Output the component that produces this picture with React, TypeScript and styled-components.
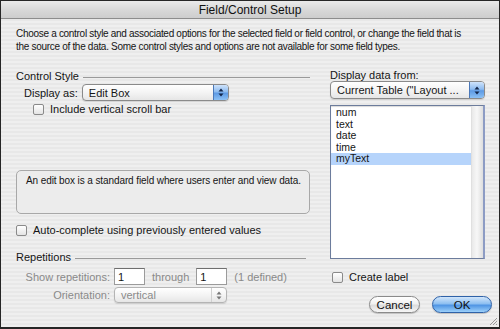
import React from "react";
import styled, { createGlobalStyle } from "styled-components";

const GlobalStyle = createGlobalStyle`
  html, body {
    margin: 0;
    padding: 0;
    background: #ffffff;
  }
  body {
    font-family: "Liberation Sans", Arial, sans-serif;
    color: #151515;
  }
`;

const Window = styled.div`
  position: relative;
  width: 500px;
  height: 329px;
  box-sizing: border-box;
  border: 1px solid #262626;
  border-bottom-width: 2px;
  overflow: hidden;
  display: flex;
  flex-direction: column;
  background: repeating-linear-gradient(
    180deg,
    #efefef 0px,
    #efefef 2px,
    #e8e8e8 2px,
    #e8e8e8 4px
  );
`;

const TitleBar = styled.div`
  height: 17px;
  flex: none;
  display: flex;
  align-items: center;
  justify-content: center;
  font-size: 12px;
  color: #111;
  border-bottom: 1px solid #8d8d8d;
  background: linear-gradient(180deg, #eaeaea 0%, #d9d9d9 50%, #cdcdcd 100%);
`;

const Body = styled.div`
  flex: 1;
  padding: 8px 14px 0 15px;
  display: flex;
  flex-direction: column;
`;

const Intro = styled.p`
  margin: 0;
  font-size: 10px;
  letter-spacing: -0.3px;
  line-height: 13px;
  white-space: nowrap;
`;

const Columns = styled.div`
  display: flex;
  gap: 20px;
  margin-top: 16px;
`;

const Column = styled.div<{ $width: number }>`
  width: ${(p) => p.$width}px;
  display: flex;
  flex-direction: column;
`;

const SectionHeader = styled.div<{ $ruleEnd?: number; $top?: number }>`
  display: flex;
  align-items: center;
  height: 13px;
  margin-top: ${(p) => p.$top ?? 0}px;
  margin-right: ${(p) => p.$ruleEnd ?? 0}px;
  font-size: 11px;
  &::after {
    content: "";
    flex: 1;
    margin-left: 4px;
    margin-top: 4px;
    border-top: 1px solid #9a9a9a;
  }
`;

const Label = styled.span<{ $muted?: boolean }>`
  font-size: 11px;
  color: ${(p) => (p.$muted ? "#8a8a8a" : "#151515")};
  white-space: nowrap;
`;

const Row = styled.div<{ $top?: number; $indent?: number }>`
  display: flex;
  align-items: center;
  gap: 4px;
  margin-top: ${(p) => p.$top ?? 0}px;
  margin-left: ${(p) => p.$indent ?? 0}px;
`;

const PopupBox = styled.div<{ $width: number; $height: number; $disabled?: boolean }>`
  width: ${(p) => p.$width}px;
  height: ${(p) => p.$height}px;
  box-sizing: border-box;
  display: flex;
  align-items: center;
  border: 1px solid ${(p) => (p.$disabled ? "#b4b4b4" : "#8a8a8a")};
  border-radius: 4px;
  background: linear-gradient(180deg, #ffffff 0%, #f4f4f4 50%, #e6e6e6 100%);
  box-shadow: 0 1px 1px rgba(0, 0, 0, 0.12);
  overflow: hidden;
`;

const PopupText = styled.span<{ $disabled?: boolean }>`
  flex: 1;
  padding-left: 6px;
  font-size: 11px;
  color: ${(p) => (p.$disabled ? "#8a8a8a" : "#151515")};
  white-space: nowrap;
  overflow: hidden;
`;

const Stepper = styled.span<{ $disabled?: boolean }>`
  width: 14px;
  align-self: stretch;
  display: flex;
  align-items: center;
  justify-content: center;
  border-left: 1px solid ${(p) => (p.$disabled ? "#d0d0d0" : "#4b78b8")};
  background: ${(p) =>
    p.$disabled
      ? "transparent"
      : "linear-gradient(180deg, #cfe3fb 0%, #8ebcf0 45%, #5d9ae4 55%, #8cc1f5 100%)"};
`;

const CheckBox = styled.span`
  width: 11px;
  height: 11px;
  box-sizing: border-box;
  flex: none;
  border: 1px solid #8a8a8a;
  border-radius: 2px;
  background: linear-gradient(180deg, #ffffff 0%, #e4e4e4 100%);
`;

const CheckText = styled.span`
  font-size: 11px;
  margin-left: 2px;
`;

const InfoBox = styled.div`
  margin-top: 55px;
  height: 44px;
  box-sizing: border-box;
  padding: 3px 9px;
  border: 1px solid #a8a8a8;
  border-radius: 5px;
  background: #ececec;
  font-size: 10px;
  letter-spacing: -0.1px;
  line-height: 13px;
  white-space: nowrap;
`;

const RepGrid = styled.div`
  display: grid;
  grid-template-columns: 94px auto;
  column-gap: 4px;
  row-gap: 2px;
  align-items: center;
  margin-top: 5px;
`;

const RightLabel = styled(Label)`
  text-align: right;
`;

const NumInput = styled.span`
  width: 31px;
  height: 17px;
  box-sizing: border-box;
  padding-left: 3px;
  display: flex;
  align-items: center;
  font-size: 11px;
  background: #ffffff;
  border: 1px solid #9b9b9b;
  border-top-color: #6f6f6f;
`;

const Inline = styled.div`
  display: flex;
  align-items: center;
  gap: 7px;
`;

const ListBox = styled.div`
  margin-top: 6px;
  height: 154px;
  box-sizing: border-box;
  display: flex;
  background: #ffffff;
  border: 1px solid #6c7c9c;
  border-right: 2px solid #8d9cc4;
  box-shadow: inset 0 1px 1px rgba(0, 0, 0, 0.15);
`;

const ListItems = styled.div`
  flex: 1;
  padding-top: 1px;
`;

const ListItem = styled.div<{ $selected?: boolean }>`
  height: 11.6px;
  line-height: 11.6px;
  padding-left: 5px;
  font-size: 10.5px;
  background: ${(p) => (p.$selected ? "#b6d4fb" : "transparent")};
`;

const ScrollTrack = styled.div`
  width: 11px;
  background: linear-gradient(90deg, #e9e9e9 0%, #f7f7f7 45%, #dedede 100%);
  border-left: 1px solid #e0e0e0;
`;

const Buttons = styled.div`
  display: flex;
  justify-content: flex-end;
  gap: 12px;
  margin-top: 13px;
  margin-right: -7px;
`;

const Button = styled.span<{ $primary?: boolean; $width: number }>`
  width: ${(p) => p.$width}px;
  height: 17px;
  box-sizing: border-box;
  display: flex;
  align-items: center;
  justify-content: center;
  border-radius: 9px;
  font-size: 11.5px;
  color: #111;
  border: 1px solid ${(p) => (p.$primary ? "#2f62a8" : "#8a8a8a")};
  background: ${(p) =>
    p.$primary
      ? "linear-gradient(180deg, #d2e6fb 0%, #8dbff1 45%, #4f95e4 55%, #9cd0fa 100%)"
      : "linear-gradient(180deg, #ffffff 0%, #f1f1f1 45%, #dcdcdc 55%, #f6f6f6 100%)"};
  box-shadow: 0 1px 1px rgba(0, 0, 0, 0.2);
`;

const Grip = styled.svg`
  position: absolute;
  right: 1px;
  bottom: 1px;
`;

const Arrows = ({ color }: { color: string }) => (
  <svg width="6" height="9" viewBox="0 0 6 9">
    <path d="M3 0.5 L5.5 3.5 H0.5 Z" fill={color} />
    <path d="M3 8.5 L5.5 5.5 H0.5 Z" fill={color} />
  </svg>
);

const Popup = ({
  value,
  width,
  height,
  disabled,
}: {
  value: string;
  width: number;
  height: number;
  disabled?: boolean;
}) => (
  <PopupBox $width={width} $height={height} $disabled={disabled}>
    <PopupText $disabled={disabled}>{value}</PopupText>
    <Stepper $disabled={disabled}>
      <Arrows color={disabled ? "#777" : "#13264a"} />
    </Stepper>
  </PopupBox>
);

const fields = ["num", "text", "date", "time", "myText"];

export default function App() {
  return (
    <>
      <GlobalStyle />
      <Window>
        <TitleBar>Field/Control Setup</TitleBar>
        <Body>
          <Intro>
            Choose a control style and associated options for the selected field or field
            control, or change the field that is
            <br />
            the source of the data. Some control styles and options are not available for some
            field types.
          </Intro>
          <Columns>
            <Column $width={294}>
              <SectionHeader>Control Style</SectionHeader>
              <Row $top={2} $indent={8}>
                <Label>Display as:</Label>
                <Popup value="Edit Box" width={147} height={17} />
              </Row>
              <Row $top={2} $indent={17}>
                <CheckBox />
                <CheckText>Include vertical scroll bar</CheckText>
              </Row>
              <InfoBox>An edit box is a standard field where users enter and view data.</InfoBox>
              <Row $top={10}>
                <CheckBox />
                <CheckText>Auto-complete using previously entered values</CheckText>
              </Row>
              <SectionHeader $top={14} $ruleEnd={4}>
                Repetitions
              </SectionHeader>
              <RepGrid>
                <RightLabel $muted>Show repetitions:</RightLabel>
                <Inline>
                  <NumInput>1</NumInput>
                  <Label $muted>through</Label>
                  <NumInput>1</NumInput>
                  <Label $muted>(1 defined)</Label>
                </Inline>
                <RightLabel $muted>Orientation:</RightLabel>
                <Popup value="vertical" width={113} height={16} disabled />
              </RepGrid>
            </Column>
            <Column $width={155}>
              <Label>Display data from:</Label>
              <Popup value={'Current Table ("Layout ...'} width={155} height={18} />
              <ListBox>
                <ListItems>
                  {fields.map((f) => (
                    <ListItem key={f} $selected={f === "myText"}>
                      {f}
                    </ListItem>
                  ))}
                </ListItems>
                <ScrollTrack />
              </ListBox>
              <Row $top={12} $indent={2}>
                <CheckBox />
                <CheckText>Create label</CheckText>
              </Row>
              <Buttons>
                <Button $width={51}>Cancel</Button>
                <Button $width={60} $primary>
                  OK
                </Button>
              </Buttons>
            </Column>
          </Columns>
        </Body>
        <Grip width="10" height="10" viewBox="0 0 10 10">
          <path d="M9 2 L2 9 M9 5 L5 9 M9 8 L8 9" stroke="#9a9a9a" strokeWidth="1" />
        </Grip>
      </Window>
    </>
  );
}
